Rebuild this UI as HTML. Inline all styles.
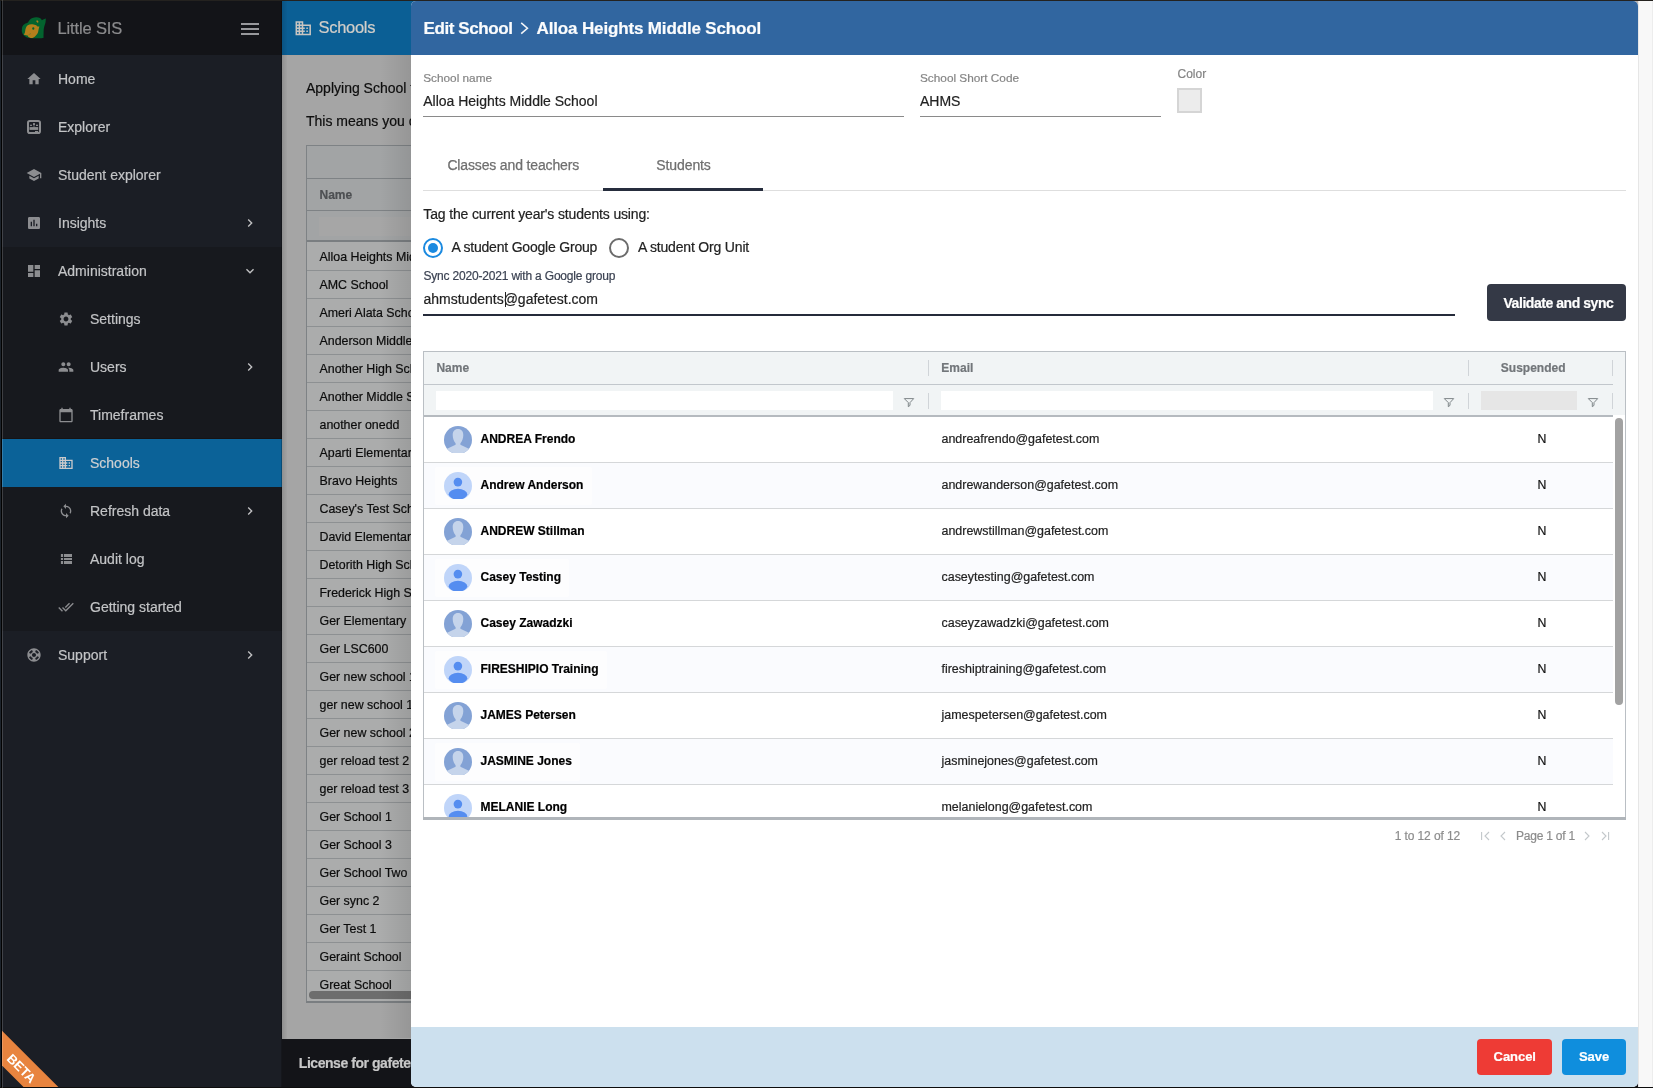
<!DOCTYPE html>
<html><head><meta charset="utf-8"><style>
*{box-sizing:border-box;margin:0;padding:0}
html,body{width:1653px;height:1088px;overflow:hidden;background:#131418;font-family:"Liberation Sans",sans-serif}
.a{position:absolute}
.t{position:absolute;white-space:nowrap;line-height:1;-webkit-text-stroke:0.2px currentColor}
#wrap{position:absolute;left:0;top:0;width:1653px;height:1088px;will-change:transform}
</style></head><body>
<div id="wrap">
<div class="a" style="left:0px;top:0px;width:282px;height:1088px;background:#1b1e25;"></div>
<div class="a" style="left:0px;top:0px;width:282px;height:55px;background:#131418;"></div>
<div class="a" style="left:0px;top:247px;width:282px;height:384px;background:#17191e;"></div>
<div class="a" style="left:0px;top:438px;width:282px;height:1px;background:#161314;"></div>
<div class="a" style="left:0px;top:439px;width:282px;height:48px;background:#0b6298;"></div>
<div class="a" style="left:0px;top:0px;width:1px;height:1088px;background:#1c232b;"></div>
<div class="a" style="left:1px;top:0px;width:1px;height:1088px;background:#020202;"></div>
<div class="a" style="left:281px;top:0px;width:1px;height:1088px;background:rgba(0,0,0,0.22);"></div>
<svg class="a" style="left:18px;top:14px" width="32" height="28" viewBox="0 0 32 28"><path fill="#03632e" d="M3.86 15.96C3.95 15.11 3.93 13.39 4.40 12.40C4.87 11.41 5.80 10.65 6.70 10.00C7.60 9.35 8.98 9.18 9.80 8.50C10.62 7.82 10.83 6.67 11.60 5.90C12.37 5.13 13.25 4.33 14.40 3.90C15.55 3.47 17.25 3.32 18.50 3.35C19.75 3.38 21.00 3.62 21.90 4.10C22.80 4.57 23.57 5.85 23.90 6.20C24.23 6.55 23.25 6.47 23.90 6.20C24.55 5.93 27.15 4.87 27.80 4.60C28.45 4.33 27.85 3.95 27.80 4.60C27.75 5.25 27.75 7.20 27.50 8.50C27.25 9.80 26.60 11.15 26.30 12.40C26.00 13.65 25.83 14.42 25.70 16.00C25.57 17.58 25.67 20.58 25.50 21.90C25.33 23.22 26.38 23.52 24.70 23.90C23.02 24.28 18.10 24.32 15.40 24.20C12.70 24.08 10.22 23.80 8.50 23.20C6.78 22.60 5.87 21.55 5.10 20.60C4.33 19.65 4.07 18.27 3.86 17.50C3.65 16.73 3.77 16.81 3.86 15.96Z"/><path fill="#b37f1c" d="M5.90 20.30C5.85 20.22 5.73 20.60 5.90 20.30C6.07 20.00 6.60 19.48 6.90 18.50C7.20 17.52 7.22 15.60 7.70 14.40C8.18 13.20 8.85 11.98 9.80 11.30C10.75 10.62 12.12 10.33 13.40 10.30C14.68 10.27 16.47 10.72 17.50 11.10C18.53 11.48 19.25 12.35 19.60 12.60C19.95 12.85 19.30 12.63 19.60 12.60C19.90 12.57 21.10 12.43 21.40 12.40C21.70 12.37 21.53 11.90 21.40 12.40C21.27 12.90 20.90 14.25 20.60 15.40C20.30 16.55 20.25 18.08 19.60 19.30C18.95 20.52 17.73 21.90 16.70 22.70C15.67 23.50 14.47 24.10 13.40 24.10C12.33 24.10 10.90 23.12 10.30 22.70C9.70 22.28 9.88 21.78 9.80 21.60C9.72 21.42 10.40 21.73 9.80 21.60C9.20 21.47 6.85 21.02 6.20 20.80C5.55 20.58 5.95 20.38 5.90 20.30Z"/><path d="M10.6 20.8 L12.9 19.5" stroke="#5e7a26" stroke-width="0.6"/><ellipse fill="#03632e" cx="15.3" cy="14.5" rx="1.05" ry="1.35"/><ellipse fill="#b37f1c" cx="19.4" cy="7.5" rx="0.85" ry="1.25" transform="rotate(-40 19.4 7.5)"/></svg>
<div class="t " style="left:57.5px;top:20.00px;font-size:16.5px;color:#8b8b8d;letter-spacing:-0.15px;">Little SIS</div>
<div class="a" style="left:241px;top:23px;width:18px;height:2px;background:#98999c;"></div>
<div class="a" style="left:241px;top:28px;width:18px;height:2px;background:#98999c;"></div>
<div class="a" style="left:241px;top:33px;width:18px;height:2px;background:#98999c;"></div>
<svg class="a" style="left:26.0px;top:71.0px" width="16" height="16" viewBox="0 0 24 24"><path fill="#8c8d90" d="M10 20v-6h4v6h5v-8h3L12 3 2 12h3v8z"/></svg>
<div class="t " style="left:58px;top:72.00px;font-size:14px;color:#c3c4c6;">Home</div>
<svg class="a" style="left:24px;top:117px" width="20" height="20" viewBox="0 0 20 20"><rect x="4" y="4" width="12" height="12" rx="1.8" fill="none" stroke="#8c8d90" stroke-width="2"/><rect x="6.1" y="7.7" width="1.8" height="1.3" fill="#8c8d90"/><rect x="9" y="6.1" width="2" height="2" rx="0.6" fill="#8c8d90"/><rect x="9.4" y="8" width="1.2" height="2.2" fill="#8c8d90" opacity="0.6"/><rect x="12" y="7.7" width="2" height="1.3" fill="#8c8d90"/><rect x="5.5" y="10.1" width="8.7" height="2.8" fill="#8c8d90"/><rect x="11" y="14" width="3" height="2" fill="#8c8d90"/></svg>
<div class="t " style="left:58px;top:120.00px;font-size:14px;color:#c3c4c6;">Explorer</div>
<svg class="a" style="left:26.0px;top:167.0px" width="16" height="16" viewBox="0 0 24 24"><path fill="#8c8d90" d="M5 13.18v4L12 21l7-3.82v-4L12 17l-7-3.82zM12 3L1 9l11 6 9-4.91V17h2V9L12 3z"/></svg>
<div class="t " style="left:58px;top:168.00px;font-size:14px;color:#c3c4c6;">Student explorer</div>
<svg class="a" style="left:26.0px;top:215.0px" width="16" height="16" viewBox="0 0 24 24"><path fill="#8c8d90" d="M19 3H5c-1.1 0-2 .9-2 2v14c0 1.1.9 2 2 2h14c1.1 0 2-.9 2-2V5c0-1.1-.9-2-2-2zM9 17H7v-7h2v7zm4 0h-2V7h2v10zm4 0h-2v-4h2v4z"/></svg>
<div class="t " style="left:58px;top:216.00px;font-size:14px;color:#c3c4c6;">Insights</div>
<svg class="a" style="left:242.0px;top:215.0px" width="16" height="16" viewBox="0 0 24 24"><path fill="#c2c2c4" d="M10 6L8.59 7.41 13.17 12l-4.58 4.59L10 18l6-6z"/></svg>
<svg class="a" style="left:26.0px;top:263.0px" width="16" height="16" viewBox="0 0 24 24"><path fill="#8c8d90" d="M3 13h8V3H3v10zm0 8h8v-6H3v6zm10 0h8V11h-8v10zm0-18v6h8V3h-8z"/></svg>
<div class="t " style="left:58px;top:264.00px;font-size:14px;color:#c3c4c6;">Administration</div>
<svg class="a" style="left:242.0px;top:263.0px" width="16" height="16" viewBox="0 0 24 24"><path fill="#c2c2c4" d="M16.59 8.59L12 13.17 7.41 8.59 6 10l6 6 6-6z"/></svg>
<svg class="a" style="left:58.0px;top:311.0px" width="16" height="16" viewBox="0 0 24 24"><path fill="#8c8d90" d="M19.14 12.94c.04-.3.06-.61.06-.94 0-.32-.02-.64-.07-.94l2.03-1.58c.18-.14.23-.41.12-.61l-1.92-3.32c-.12-.22-.37-.29-.59-.22l-2.39.96c-.5-.38-1.03-.7-1.62-.94l-.36-2.54c-.04-.24-.24-.41-.48-.41h-3.84c-.24 0-.43.17-.47.41l-.36 2.54c-.59.24-1.13.57-1.62.94l-2.39-.96c-.22-.08-.47 0-.59.22L2.74 8.87c-.12.21-.08.47.12.61l2.03 1.58c-.05.3-.09.63-.09.94s.02.64.07.94l-2.03 1.58c-.18.14-.23.41-.12.61l1.92 3.32c.12.22.37.29.59.22l2.39-.96c.5.38 1.03.7 1.62.94l.36 2.54c.05.24.24.41.48.41h3.840c.24 0 .44-.17.47-.41l.36-2.54c.59-.24 1.13-.56 1.62-.94l2.39.96c.22.08.47 0 .59-.22l1.92-3.32c.12-.22.07-.47-.12-.61l-2.01-1.58zM12 15.6c-1.98 0-3.6-1.62-3.6-3.6s1.62-3.6 3.6-3.6 3.6 1.62 3.6 3.6-1.62 3.6-3.6 3.6z"/></svg>
<div class="t " style="left:90px;top:312.00px;font-size:14px;color:#c3c4c6;">Settings</div>
<svg class="a" style="left:58.0px;top:359.0px" width="16" height="16" viewBox="0 0 24 24"><path fill="#8c8d90" d="M16 11c1.66 0 2.99-1.34 2.99-3S17.660 5 16 5c-1.66 0-3 1.34-3 3s1.34 3 3 3zm-8 0c1.66 0 2.99-1.34 2.99-3S9.66 5 8 5C6.34 5 5 6.34 5 8s1.34 3 3 3zm0 2c-2.33 0-7 1.17-7 3.5V19h14v-2.5c0-2.33-4.67-3.5-7-3.5zm8 0c-.29 0-.62.02-.97.05 1.16.84 1.97 1.97 1.97 3.45V19h6v-2.5c0-2.33-4.67-3.5-7-3.5z"/></svg>
<div class="t " style="left:90px;top:360.00px;font-size:14px;color:#c3c4c6;">Users</div>
<svg class="a" style="left:242.0px;top:359.0px" width="16" height="16" viewBox="0 0 24 24"><path fill="#c2c2c4" d="M10 6L8.59 7.41 13.17 12l-4.58 4.59L10 18l6-6z"/></svg>
<svg class="a" style="left:58.0px;top:407.0px" width="16" height="16" viewBox="0 0 24 24"><path fill="#8c8d90" d="M20 3h-1V1h-2v2H7V1H5v2H4c-1.1 0-2 .9-2 2v16c0 1.1.9 2 2 2h16c1.1 0 2-.9 2-2V5c0-1.1-.9-2-2-2zm0 18H4V8h16v13z"/></svg>
<div class="t " style="left:90px;top:408.00px;font-size:14px;color:#c3c4c6;">Timeframes</div>
<svg class="a" style="left:58.0px;top:455.0px" width="16" height="16" viewBox="0 0 24 24"><path fill="#c9c9cb" d="M12 7V3H2v18h20V7H12zM6 19H4v-2h2v2zm0-4H4v-2h2v2zm0-4H4V9h2v2zm0-4H4V5h2v2zm4 12H8v-2h2v2zm0-4H8v-2h2v2zm0-4H8V9h2v2zm0-4H8V5h2v2zm10 12h-8v-2h2v-2h-2v-2h2v-2h-2V9h8v10zm-2-8h-2v2h2v-2zm0 4h-2v2h2v-2z"/></svg>
<div class="t " style="left:90px;top:456.00px;font-size:14px;color:#cfd0d2;">Schools</div>
<svg class="a" style="left:58.0px;top:503.0px" width="16" height="16" viewBox="0 0 24 24"><path fill="#8c8d90" d="M12 4V1L8 5l4 4V6c3.31 0 6 2.69 6 6 0 1.01-.25 1.97-.7 2.8l1.46 1.46C19.54 15.03 20 13.57 20 12c0-4.42-3.58-8-8-8zm0 14c-3.31 0-6-2.69-6-6 0-1.01.25-1.97.7-2.8L5.24 7.74C4.46 8.97 4 10.43 4 12c0 4.42 3.58 8 8 8v3l4-4-4-4v3z"/></svg>
<div class="t " style="left:90px;top:504.00px;font-size:14px;color:#c3c4c6;">Refresh data</div>
<svg class="a" style="left:242.0px;top:503.0px" width="16" height="16" viewBox="0 0 24 24"><path fill="#c2c2c4" d="M10 6L8.59 7.41 13.17 12l-4.58 4.59L10 18l6-6z"/></svg>
<svg class="a" style="left:60px;top:553px" width="14" height="12" viewBox="0 0 14 12"><g fill="#8c8d90"><rect x="0.9" y="1" width="2.2" height="3"/><rect x="4" y="1" width="8" height="3"/><rect x="0.9" y="5" width="2.2" height="2"/><rect x="4" y="5" width="8" height="2"/><rect x="0.9" y="8" width="2.2" height="3"/><rect x="4" y="8" width="8" height="3"/></g></svg>
<div class="t " style="left:90px;top:552.00px;font-size:14px;color:#c3c4c6;">Audit log</div>
<svg class="a" style="left:58.0px;top:599.0px" width="16" height="16" viewBox="0 0 24 24"><path fill="#8c8d90" d="M18 7l-1.41-1.41-6.34 6.34 1.41 1.41L18 7zm4.24-1.41L11.66 16.17 7.48 12l-1.41 1.41L11.66 19l12-12-1.42-1.41zM.41 13.41L6 19l1.41-1.41L1.830 12 .41 13.41z"/></svg>
<div class="t " style="left:90px;top:600.00px;font-size:14px;color:#c3c4c6;">Getting started</div>
<svg class="a" style="left:26.0px;top:647.0px" width="16" height="16" viewBox="0 0 24 24"><path fill="#8c8d90" d="M12 2C6.48 2 2 6.48 2 12s4.48 10 10 10 10-4.48 10-10S17.52 2 12 2zm7.46 7.12l-2.78 1.15c-.51-1.36-1.58-2.44-2.95-2.94l1.15-2.78c2.1.8 3.77 2.47 4.58 4.57zM12 15c-1.66 0-3-1.34-3-3s1.34-3 3-3 3 1.34 3 3-1.34 3-3 3zM9.13 4.54l1.17 2.78c-1.38.5-2.47 1.59-2.98 2.97L4.54 9.13c.81-2.11 2.48-3.78 4.59-4.59zM4.54 14.87l2.78-1.15c.51 1.38 1.59 2.46 2.97 2.96l-1.17 2.78c-2.1-.81-3.77-2.48-4.58-4.59zm10.34 4.59l-1.15-2.78c1.37-.51 2.45-1.59 2.95-2.97l2.78 1.17c-.81 2.1-2.48 3.77-4.58 4.58z"/></svg>
<div class="t " style="left:58px;top:648.00px;font-size:14px;color:#c3c4c6;">Support</div>
<svg class="a" style="left:242.0px;top:647.0px" width="16" height="16" viewBox="0 0 24 24"><path fill="#c2c2c4" d="M10 6L8.59 7.41 13.17 12l-4.58 4.59L10 18l6-6z"/></svg>
<svg class="a" style="left:0;top:1028px" width="60" height="60" viewBox="0 0 60 60"><path fill="#e8843f" d="M2 2.7 L59.3 60 L24.5 60 L2 37.5z"/><text x="0" y="0" transform="translate(18.3 43.6) rotate(45)" font-family="Liberation Sans" font-weight="bold" font-size="13" fill="#fff" text-anchor="middle">BETA</text></svg>
<div class="a" style="left:282px;top:0px;width:1371px;height:1088px;background:#a5a5a5;"></div>
<div class="a" style="left:282px;top:0px;width:1371px;height:55px;background:#0b5f95;"></div>
<div class="a" style="left:282px;top:55px;width:1371px;height:1px;background:#a9a39f;"></div>
<svg class="a" style="left:293.75px;top:18.85px" width="18.5" height="18.5" viewBox="0 0 24 24"><path fill="#c9c5c1" d="M12 7V3H2v18h20V7H12zM6 19H4v-2h2v2zm0-4H4v-2h2v2zm0-4H4V9h2v2zm0-4H4V5h2v2zm4 12H8v-2h2v2zm0-4H8v-2h2v2zm0-4H8V9h2v2zm0-4H8V5h2v2zm10 12h-8v-2h2v-2h-2v-2h2v-2h-2V9h8v10zm-2-8h-2v2h2v-2zm0 4h-2v2h2v-2z"/></svg>
<div class="t " style="left:318.5px;top:19.00px;font-size:16.5px;color:#d2cec9;letter-spacing:-0.3px;">Schools</div>
<div class="t " style="left:306px;top:81.00px;font-size:14px;color:#0e0e0e;">Applying School tags</div>
<div class="t " style="left:306px;top:114.00px;font-size:14px;color:#0e0e0e;">This means you can</div>
<div class="a" style="left:306px;top:145px;width:110px;height:858px;background:#abacac;border:1px solid #7e8285;"></div>
<div class="a" style="left:307px;top:146px;width:110px;height:32px;background:#a2a4a5;"></div>
<div class="a" style="left:307px;top:178px;width:110px;height:1px;background:#7e8285;"></div>
<div class="a" style="left:307px;top:179px;width:110px;height:31px;background:#a2a4a5;"></div>
<div class="t " style="left:319.5px;top:189.00px;font-size:12px;color:#4d4f52;font-weight:bold;">Name</div>
<div class="a" style="left:307px;top:210px;width:110px;height:1px;background:#7e8285;"></div>
<div class="a" style="left:307px;top:211px;width:110px;height:30px;background:#a2a4a5;"></div>
<div class="a" style="left:319px;top:217px;width:100px;height:19px;background:#a6a6a6;"></div>
<div class="a" style="left:307px;top:240px;width:110px;height:2px;background:#7a7e81;"></div>
<div class="t " style="left:319.5px;top:251.00px;font-size:12.4px;color:#0c0c0c;">Alloa Heights Middle School</div>
<div class="a" style="left:307px;top:270px;width:110px;height:1px;background:#8d9092;"></div>
<div class="t " style="left:319.5px;top:279.00px;font-size:12.4px;color:#0c0c0c;">AMC School</div>
<div class="a" style="left:307px;top:298px;width:110px;height:1px;background:#8d9092;"></div>
<div class="t " style="left:319.5px;top:307.00px;font-size:12.4px;color:#0c0c0c;">Ameri Alata School</div>
<div class="a" style="left:307px;top:326px;width:110px;height:1px;background:#8d9092;"></div>
<div class="t " style="left:319.5px;top:335.00px;font-size:12.4px;color:#0c0c0c;">Anderson Middle School</div>
<div class="a" style="left:307px;top:354px;width:110px;height:1px;background:#8d9092;"></div>
<div class="t " style="left:319.5px;top:363.00px;font-size:12.4px;color:#0c0c0c;">Another High School</div>
<div class="a" style="left:307px;top:382px;width:110px;height:1px;background:#8d9092;"></div>
<div class="t " style="left:319.5px;top:391.00px;font-size:12.4px;color:#0c0c0c;">Another Middle School</div>
<div class="a" style="left:307px;top:410px;width:110px;height:1px;background:#8d9092;"></div>
<div class="t " style="left:319.5px;top:419.00px;font-size:12.4px;color:#0c0c0c;">another onedd</div>
<div class="a" style="left:307px;top:438px;width:110px;height:1px;background:#8d9092;"></div>
<div class="t " style="left:319.5px;top:447.00px;font-size:12.4px;color:#0c0c0c;">Aparti Elementary</div>
<div class="a" style="left:307px;top:466px;width:110px;height:1px;background:#8d9092;"></div>
<div class="t " style="left:319.5px;top:475.00px;font-size:12.4px;color:#0c0c0c;">Bravo Heights</div>
<div class="a" style="left:307px;top:494px;width:110px;height:1px;background:#8d9092;"></div>
<div class="t " style="left:319.5px;top:503.00px;font-size:12.4px;color:#0c0c0c;">Casey&#x27;s Test School</div>
<div class="a" style="left:307px;top:522px;width:110px;height:1px;background:#8d9092;"></div>
<div class="t " style="left:319.5px;top:531.00px;font-size:12.4px;color:#0c0c0c;">David Elementary</div>
<div class="a" style="left:307px;top:550px;width:110px;height:1px;background:#8d9092;"></div>
<div class="t " style="left:319.5px;top:559.00px;font-size:12.4px;color:#0c0c0c;">Detorith High School</div>
<div class="a" style="left:307px;top:578px;width:110px;height:1px;background:#8d9092;"></div>
<div class="t " style="left:319.5px;top:587.00px;font-size:12.4px;color:#0c0c0c;">Frederick High School</div>
<div class="a" style="left:307px;top:606px;width:110px;height:1px;background:#8d9092;"></div>
<div class="t " style="left:319.5px;top:615.00px;font-size:12.4px;color:#0c0c0c;">Ger Elementary</div>
<div class="a" style="left:307px;top:634px;width:110px;height:1px;background:#8d9092;"></div>
<div class="t " style="left:319.5px;top:643.00px;font-size:12.4px;color:#0c0c0c;">Ger LSC600</div>
<div class="a" style="left:307px;top:662px;width:110px;height:1px;background:#8d9092;"></div>
<div class="t " style="left:319.5px;top:671.00px;font-size:12.4px;color:#0c0c0c;">Ger new school 1</div>
<div class="a" style="left:307px;top:690px;width:110px;height:1px;background:#8d9092;"></div>
<div class="t " style="left:319.5px;top:699.00px;font-size:12.4px;color:#0c0c0c;">ger new school 1</div>
<div class="a" style="left:307px;top:718px;width:110px;height:1px;background:#8d9092;"></div>
<div class="t " style="left:319.5px;top:727.00px;font-size:12.4px;color:#0c0c0c;">Ger new school 2</div>
<div class="a" style="left:307px;top:746px;width:110px;height:1px;background:#8d9092;"></div>
<div class="t " style="left:319.5px;top:755.00px;font-size:12.4px;color:#0c0c0c;">ger reload test 2</div>
<div class="a" style="left:307px;top:774px;width:110px;height:1px;background:#8d9092;"></div>
<div class="t " style="left:319.5px;top:783.00px;font-size:12.4px;color:#0c0c0c;">ger reload test 3</div>
<div class="a" style="left:307px;top:802px;width:110px;height:1px;background:#8d9092;"></div>
<div class="t " style="left:319.5px;top:811.00px;font-size:12.4px;color:#0c0c0c;">Ger School 1</div>
<div class="a" style="left:307px;top:830px;width:110px;height:1px;background:#8d9092;"></div>
<div class="t " style="left:319.5px;top:839.00px;font-size:12.4px;color:#0c0c0c;">Ger School 3</div>
<div class="a" style="left:307px;top:858px;width:110px;height:1px;background:#8d9092;"></div>
<div class="t " style="left:319.5px;top:867.00px;font-size:12.4px;color:#0c0c0c;">Ger School Two</div>
<div class="a" style="left:307px;top:886px;width:110px;height:1px;background:#8d9092;"></div>
<div class="t " style="left:319.5px;top:895.00px;font-size:12.4px;color:#0c0c0c;">Ger sync 2</div>
<div class="a" style="left:307px;top:914px;width:110px;height:1px;background:#8d9092;"></div>
<div class="t " style="left:319.5px;top:923.00px;font-size:12.4px;color:#0c0c0c;">Ger Test 1</div>
<div class="a" style="left:307px;top:942px;width:110px;height:1px;background:#8d9092;"></div>
<div class="t " style="left:319.5px;top:951.00px;font-size:12.4px;color:#0c0c0c;">Geraint School</div>
<div class="a" style="left:307px;top:970px;width:110px;height:1px;background:#8d9092;"></div>
<div class="t " style="left:319.5px;top:979.00px;font-size:12.4px;color:#0c0c0c;">Great School</div>
<div class="a" style="left:309px;top:991px;width:110px;height:8px;background:#6d6d6d;border-radius:4px;"></div>
<div class="a" style="left:306px;top:1001px;width:110px;height:2px;background:#7a7e81;"></div>
<div class="a" style="left:380px;top:55px;width:31px;height:983px;background:linear-gradient(to right,rgba(0,0,0,0),rgba(0,0,0,0.09));"></div>
<div class="a" style="left:282px;top:1039px;width:1371px;height:49px;background:#131418;"></div>
<div class="t " style="left:298.8px;top:1056.00px;font-size:14px;color:#c8c8c8;font-weight:bold;letter-spacing:-0.45px;">License for gafetest.com</div>
<div class="a" style="left:0px;top:0px;width:1653px;height:1px;background:#24221f;"></div>
<div class="a" style="left:0px;top:1087px;width:1653px;height:1px;background:#0d0d0d;"></div>
<div class="a" style="left:282px;top:0px;width:5px;height:1039px;background:linear-gradient(to right,rgba(0,0,0,0.13),rgba(0,0,0,0.02));"></div>
<div class="a" style="left:2px;top:0px;width:1px;height:1088px;background:rgba(255,255,255,0.17);"></div>
<div class="a" style="left:1638px;top:1px;width:15px;height:1086px;background:#f8f8f8;border-left:1px solid #e6e6e6;border-right:1px solid #ededed;"></div>
<div class="a" style="left:1630px;top:1px;width:8px;height:8px;background:#b9b3ad;"></div>
<div class="a" style="left:411px;top:1px;width:1227px;height:1086px;background:#fff;border-radius:5px;overflow:hidden">
<div class="a" style="left:0px;top:0px;width:1227px;height:54px;background:#3166a0;"></div>
<div class="t " style="left:12.5px;top:19.00px;font-size:17px;color:#fbfcfd;font-weight:bold;letter-spacing:-0.4px;">Edit School</div>
<svg class="a" style="left:107px;top:19px" width="14" height="16" viewBox="0 0 14 16"><path d="M3.2 2.9 L9.4 8.25 L3.2 13.6" fill="none" stroke="#f2f4f7" stroke-width="1.6"/></svg>
<div class="t " style="left:125.60000000000002px;top:19.00px;font-size:17px;color:#fbfcfd;font-weight:bold;letter-spacing:-0.15px;">Alloa Heights Middle School</div>
<div class="t " style="left:12.199999999999989px;top:72.00px;font-size:11.8px;color:#858585;">School name</div>
<div class="t " style="left:12.199999999999989px;top:93.00px;font-size:14px;color:#222;">Alloa Heights Middle School</div>
<div class="a" style="left:12px;top:115px;width:481px;height:1px;background:#8a8a8a;"></div>
<div class="t " style="left:509px;top:72.00px;font-size:11.8px;color:#858585;">School Short Code</div>
<div class="t " style="left:509px;top:93.00px;font-size:14px;color:#222;">AHMS</div>
<div class="a" style="left:509px;top:115px;width:241px;height:1px;background:#8a8a8a;"></div>
<div class="t " style="left:766.5px;top:67.00px;font-size:12px;color:#858585;">Color</div>
<div class="a" style="left:766px;top:87px;width:25px;height:25px;background:#ececec;border:2px solid #d5d5d5;"></div>
<div class="t " style="left:36.39999999999998px;top:157.00px;font-size:14px;color:#6f6f6f;letter-spacing:-0.15px;-webkit-text-stroke:0.25px #6f6f6f;">Classes and teachers</div>
<div class="t " style="left:245.29999999999995px;top:157.00px;font-size:14px;color:#6f6f6f;letter-spacing:-0.1px;-webkit-text-stroke:0.25px #6f6f6f;">Students</div>
<div class="a" style="left:12px;top:189px;width:1203px;height:1px;background:#dedede;"></div>
<div class="a" style="left:192px;top:187px;width:160px;height:3px;background:#262d3d;"></div>
<div class="t " style="left:12.300000000000011px;top:206.00px;font-size:14px;color:#222;letter-spacing:-0.15px;">Tag the current year&#x27;s students using:</div>
<div class="a" style="left:12px;top:237px;width:20px;height:20px;border:2px solid #1b8ae0;border-radius:50%"></div>
<div class="a" style="left:17px;top:242px;width:10px;height:10px;background:#1b8ae0;border-radius:50%"></div>
<div class="t " style="left:40.39999999999998px;top:239.00px;font-size:14px;color:#222;letter-spacing:-0.2px;">A student Google Group</div>
<div class="a" style="left:198px;top:237px;width:20px;height:20px;border:2px solid #6c6c6c;border-radius:50%"></div>
<div class="t " style="left:226.89999999999998px;top:239.00px;font-size:14px;color:#222;letter-spacing:-0.18px;">A student Org Unit</div>
<div class="t " style="left:12.5px;top:269.00px;font-size:12px;color:#3b4252;letter-spacing:-0.19px;">Sync 2020-2021 with a Google group</div>
<div class="t " style="left:12.5px;top:291.00px;font-size:14px;color:#222;">ahmstudents@gafetest.com</div>
<div class="a" style="left:94px;top:291px;width:1px;height:15px;background:#222;"></div>
<div class="a" style="left:12px;top:313px;width:1032px;height:2px;background:#252b3a;"></div>
<div class="a" style="left:1076px;top:283px;width:139px;height:37px;background:#343946;border-radius:4px;"></div>
<div class="t " style="left:1092.5px;top:295.00px;font-size:14px;color:#fff;font-weight:bold;letter-spacing:-0.45px;">Validate and sync</div>
<div class="a" style="left:12px;top:350px;width:1203px;height:468px;background:#fff;border:1px solid #babfc4;border-bottom:0;"></div>
<div class="a" style="left:13px;top:351px;width:1201px;height:63px;background:#f1f4f5;"></div>
<div class="a" style="left:13px;top:383px;width:1189px;height:1px;background:#c2c7cc;"></div>
<div class="a" style="left:13px;top:414px;width:1189px;height:2px;background:#b5babf;"></div>
<div class="t " style="left:25.399999999999977px;top:361.00px;font-size:12px;color:#72767a;font-weight:bold;">Name</div>
<div class="t " style="left:530.3px;top:361.00px;font-size:12px;color:#72767a;font-weight:bold;">Email</div>
<div class="t " style="left:1089.8px;top:361.00px;font-size:12px;color:#72767a;font-weight:bold;">Suspended</div>
<div class="a" style="left:517px;top:359px;width:1px;height:16px;background:#d0d4d8;"></div>
<div class="a" style="left:517px;top:392px;width:1px;height:16px;background:#d0d4d8;"></div>
<div class="a" style="left:1057px;top:359px;width:1px;height:16px;background:#d0d4d8;"></div>
<div class="a" style="left:1057px;top:392px;width:1px;height:16px;background:#d0d4d8;"></div>
<div class="a" style="left:1201px;top:359px;width:1px;height:16px;background:#d0d4d8;"></div>
<div class="a" style="left:1201px;top:392px;width:1px;height:16px;background:#d0d4d8;"></div>
<div class="a" style="left:25px;top:390px;width:457px;height:19px;background:#fff;"></div>
<div class="a" style="left:530px;top:390px;width:492px;height:19px;background:#fff;"></div>
<div class="a" style="left:1070px;top:390px;width:96px;height:19px;background:#e6e6e6;"></div>
<svg class="a" style="left:492px;top:396px" width="12" height="11" viewBox="0 0 12 11"><path d="M1.3 1.6 H10.7 L7 5.6 V8.4 L5.3 9.7 V5.6 Z" fill="none" stroke="#7f8689" stroke-width="1" stroke-linejoin="round"/></svg>
<svg class="a" style="left:1032px;top:396px" width="12" height="11" viewBox="0 0 12 11"><path d="M1.3 1.6 H10.7 L7 5.6 V8.4 L5.3 9.7 V5.6 Z" fill="none" stroke="#7f8689" stroke-width="1" stroke-linejoin="round"/></svg>
<svg class="a" style="left:1176px;top:396px" width="12" height="11" viewBox="0 0 12 11"><path d="M1.3 1.6 H10.7 L7 5.6 V8.4 L5.3 9.7 V5.6 Z" fill="none" stroke="#7f8689" stroke-width="1" stroke-linejoin="round"/></svg>
<div class="a" style="left:13px;top:416px;width:1201px;height:400px;overflow:hidden">
<div class="a" style="left:0px;top:45px;width:1189px;height:1px;background:#d5d7d9;"></div>
<svg class="a" style="left:20px;top:9px" width="28" height="27" viewBox="0 0 28 27"><defs><clipPath id="c0"><circle cx="14" cy="14" r="14"/></clipPath></defs><g clip-path="url(#c0)"><rect width="28" height="28" fill="#83a2d5"/><path fill="#c5d4eb" d="M14 3.1C17.5 3.1 19.3 5.6 19.3 9C19.3 12.4 18 15.4 16.4 17.2V18.7L26.5 23.6V28H1.5V23.6L11.6 18.7V17.2C10 15.4 8.7 12.4 8.7 9C8.7 5.6 10.5 3.1 14 3.1Z"/></g></svg>
<div class="t " style="left:56.5px;top:16.00px;font-size:12px;color:#000;font-weight:bold;">ANDREA Frendo</div>
<div class="t " style="left:517.5px;top:16.00px;font-size:12.45px;color:#222;">andreafrendo@gafetest.com</div>
<div class="t " style="left:1113.4px;top:16.00px;font-size:12.3px;color:#111;">N</div>
<div class="a" style="left:0px;top:46px;width:1189px;height:46px;background:#fafbfe;"></div>
<div class="a" style="left:11px;top:50px;width:157px;height:38px;background:#fdfdfe;border-radius:2px;"></div>
<div class="a" style="left:0px;top:91px;width:1189px;height:1px;background:#d5d7d9;"></div>
<svg class="a" style="left:20px;top:55px" width="28" height="27" viewBox="0 0 28 27"><defs><clipPath id="c1"><circle cx="14" cy="14" r="14"/></clipPath></defs><g clip-path="url(#c1)"><rect width="28" height="28" fill="#c0d5f9"/><circle cx="13.9" cy="10.1" r="4.3" fill="#558df0"/><ellipse cx="14" cy="22.2" rx="9.3" ry="5.4" fill="#558df0"/></g></svg>
<div class="t " style="left:56.5px;top:62.00px;font-size:12px;color:#000;font-weight:bold;">Andrew Anderson</div>
<div class="t " style="left:517.5px;top:62.00px;font-size:12.45px;color:#222;">andrewanderson@gafetest.com</div>
<div class="t " style="left:1113.4px;top:62.00px;font-size:12.3px;color:#111;">N</div>
<div class="a" style="left:0px;top:137px;width:1189px;height:1px;background:#d5d7d9;"></div>
<svg class="a" style="left:20px;top:101px" width="28" height="27" viewBox="0 0 28 27"><defs><clipPath id="c2"><circle cx="14" cy="14" r="14"/></clipPath></defs><g clip-path="url(#c2)"><rect width="28" height="28" fill="#83a2d5"/><path fill="#c5d4eb" d="M14 3.1C17.5 3.1 19.3 5.6 19.3 9C19.3 12.4 18 15.4 16.4 17.2V18.7L26.5 23.6V28H1.5V23.6L11.6 18.7V17.2C10 15.4 8.7 12.4 8.7 9C8.7 5.6 10.5 3.1 14 3.1Z"/></g></svg>
<div class="t " style="left:56.5px;top:108.00px;font-size:12px;color:#000;font-weight:bold;">ANDREW Stillman</div>
<div class="t " style="left:517.5px;top:108.00px;font-size:12.45px;color:#222;">andrewstillman@gafetest.com</div>
<div class="t " style="left:1113.4px;top:108.00px;font-size:12.3px;color:#111;">N</div>
<div class="a" style="left:0px;top:138px;width:1189px;height:46px;background:#fafbfe;"></div>
<div class="a" style="left:11px;top:142px;width:134px;height:38px;background:#fdfdfe;border-radius:2px;"></div>
<div class="a" style="left:0px;top:183px;width:1189px;height:1px;background:#d5d7d9;"></div>
<svg class="a" style="left:20px;top:147px" width="28" height="27" viewBox="0 0 28 27"><defs><clipPath id="c3"><circle cx="14" cy="14" r="14"/></clipPath></defs><g clip-path="url(#c3)"><rect width="28" height="28" fill="#c0d5f9"/><circle cx="13.9" cy="10.1" r="4.3" fill="#558df0"/><ellipse cx="14" cy="22.2" rx="9.3" ry="5.4" fill="#558df0"/></g></svg>
<div class="t " style="left:56.5px;top:154.00px;font-size:12px;color:#000;font-weight:bold;">Casey Testing</div>
<div class="t " style="left:517.5px;top:154.00px;font-size:12.45px;color:#222;">caseytesting@gafetest.com</div>
<div class="t " style="left:1113.4px;top:154.00px;font-size:12.3px;color:#111;">N</div>
<div class="a" style="left:0px;top:229px;width:1189px;height:1px;background:#d5d7d9;"></div>
<svg class="a" style="left:20px;top:193px" width="28" height="27" viewBox="0 0 28 27"><defs><clipPath id="c4"><circle cx="14" cy="14" r="14"/></clipPath></defs><g clip-path="url(#c4)"><rect width="28" height="28" fill="#83a2d5"/><path fill="#c5d4eb" d="M14 3.1C17.5 3.1 19.3 5.6 19.3 9C19.3 12.4 18 15.4 16.4 17.2V18.7L26.5 23.6V28H1.5V23.6L11.6 18.7V17.2C10 15.4 8.7 12.4 8.7 9C8.7 5.6 10.5 3.1 14 3.1Z"/></g></svg>
<div class="t " style="left:56.5px;top:200.00px;font-size:12px;color:#000;font-weight:bold;">Casey Zawadzki</div>
<div class="t " style="left:517.5px;top:200.00px;font-size:12.45px;color:#222;">caseyzawadzki@gafetest.com</div>
<div class="t " style="left:1113.4px;top:200.00px;font-size:12.3px;color:#111;">N</div>
<div class="a" style="left:0px;top:230px;width:1189px;height:46px;background:#fafbfe;"></div>
<div class="a" style="left:11px;top:234px;width:172px;height:38px;background:#fdfdfe;border-radius:2px;"></div>
<div class="a" style="left:0px;top:275px;width:1189px;height:1px;background:#d5d7d9;"></div>
<svg class="a" style="left:20px;top:239px" width="28" height="27" viewBox="0 0 28 27"><defs><clipPath id="c5"><circle cx="14" cy="14" r="14"/></clipPath></defs><g clip-path="url(#c5)"><rect width="28" height="28" fill="#c0d5f9"/><circle cx="13.9" cy="10.1" r="4.3" fill="#558df0"/><ellipse cx="14" cy="22.2" rx="9.3" ry="5.4" fill="#558df0"/></g></svg>
<div class="t " style="left:56.5px;top:246.00px;font-size:12px;color:#000;font-weight:bold;">FIRESHIPIO Training</div>
<div class="t " style="left:517.5px;top:246.00px;font-size:12.45px;color:#222;">fireshiptraining@gafetest.com</div>
<div class="t " style="left:1113.4px;top:246.00px;font-size:12.3px;color:#111;">N</div>
<div class="a" style="left:0px;top:321px;width:1189px;height:1px;background:#d5d7d9;"></div>
<svg class="a" style="left:20px;top:285px" width="28" height="27" viewBox="0 0 28 27"><defs><clipPath id="c6"><circle cx="14" cy="14" r="14"/></clipPath></defs><g clip-path="url(#c6)"><rect width="28" height="28" fill="#83a2d5"/><path fill="#c5d4eb" d="M14 3.1C17.5 3.1 19.3 5.6 19.3 9C19.3 12.4 18 15.4 16.4 17.2V18.7L26.5 23.6V28H1.5V23.6L11.6 18.7V17.2C10 15.4 8.7 12.4 8.7 9C8.7 5.6 10.5 3.1 14 3.1Z"/></g></svg>
<div class="t " style="left:56.5px;top:292.00px;font-size:12px;color:#000;font-weight:bold;">JAMES Petersen</div>
<div class="t " style="left:517.5px;top:292.00px;font-size:12.45px;color:#222;">jamespetersen@gafetest.com</div>
<div class="t " style="left:1113.4px;top:292.00px;font-size:12.3px;color:#111;">N</div>
<div class="a" style="left:0px;top:322px;width:1189px;height:46px;background:#fafbfe;"></div>
<div class="a" style="left:11px;top:326px;width:145px;height:38px;background:#fdfdfe;border-radius:2px;"></div>
<div class="a" style="left:0px;top:367px;width:1189px;height:1px;background:#d5d7d9;"></div>
<svg class="a" style="left:20px;top:331px" width="28" height="27" viewBox="0 0 28 27"><defs><clipPath id="c7"><circle cx="14" cy="14" r="14"/></clipPath></defs><g clip-path="url(#c7)"><rect width="28" height="28" fill="#83a2d5"/><path fill="#c5d4eb" d="M14 3.1C17.5 3.1 19.3 5.6 19.3 9C19.3 12.4 18 15.4 16.4 17.2V18.7L26.5 23.6V28H1.5V23.6L11.6 18.7V17.2C10 15.4 8.7 12.4 8.7 9C8.7 5.6 10.5 3.1 14 3.1Z"/></g></svg>
<div class="t " style="left:56.5px;top:338.00px;font-size:12px;color:#000;font-weight:bold;">JASMINE Jones</div>
<div class="t " style="left:517.5px;top:338.00px;font-size:12.45px;color:#222;">jasminejones@gafetest.com</div>
<div class="t " style="left:1113.4px;top:338.00px;font-size:12.3px;color:#111;">N</div>
<svg class="a" style="left:20px;top:377px" width="28" height="27" viewBox="0 0 28 27"><defs><clipPath id="c8"><circle cx="14" cy="14" r="14"/></clipPath></defs><g clip-path="url(#c8)"><rect width="28" height="28" fill="#c0d5f9"/><circle cx="13.9" cy="10.1" r="4.3" fill="#558df0"/><ellipse cx="14" cy="22.2" rx="9.3" ry="5.4" fill="#558df0"/></g></svg>
<div class="t " style="left:56.5px;top:384.00px;font-size:12px;color:#000;font-weight:bold;">MELANIE Long</div>
<div class="t " style="left:517.5px;top:384.00px;font-size:12.45px;color:#222;">melanielong@gafetest.com</div>
<div class="t " style="left:1113.4px;top:384.00px;font-size:12.3px;color:#111;">N</div>
<div class="a" style="left:1191px;top:1px;width:8px;height:287px;background:#a2a2a2;border-radius:4px;"></div>
</div>
<div class="a" style="left:12px;top:816px;width:1203px;height:3px;background:#b0b5ba;"></div>
<div class="t " style="left:983.7px;top:829.00px;font-size:12px;color:#8c8c8c;letter-spacing:-0.1px;">1 to 12 of 12</div>
<div class="t " style="left:1104.9px;top:829.00px;font-size:12px;color:#8c8c8c;letter-spacing:-0.2px;">Page 1 of 1</div>
<svg class="a" style="left:1068px;top:829px" width="12" height="12" viewBox="0 0 12 12"><path d="M2.6 2 V10 M10 2 L6 6 L10 10" fill="none" stroke="#c3c8cb" stroke-width="1.1"/></svg>
<svg class="a" style="left:1086px;top:829px" width="12" height="12" viewBox="0 0 12 12"><path d="M8 2 L4 6 L8 10" fill="none" stroke="#c3c8cb" stroke-width="1.1"/></svg>
<svg class="a" style="left:1170px;top:829px" width="12" height="12" viewBox="0 0 12 12"><path d="M4 2 L8 6 L4 10" fill="none" stroke="#c3c8cb" stroke-width="1.1"/></svg>
<svg class="a" style="left:1188px;top:829px" width="12" height="12" viewBox="0 0 12 12"><path d="M3 2 L7 6 L3 10 M9.6 2 V10" fill="none" stroke="#c3c8cb" stroke-width="1.1"/></svg>
<div class="a" style="left:0px;top:1026px;width:1227px;height:60px;background:#cce0ee;"></div>
<div class="a" style="left:1066px;top:1038px;width:75px;height:36px;background:#ee3b35;border-radius:4px;"></div>
<div class="t " style="left:1082.6px;top:1049.00px;font-size:13px;color:#fff;font-weight:bold;letter-spacing:-0.05px;">Cancel</div>
<div class="a" style="left:1151px;top:1038px;width:64px;height:36px;background:#0f8edd;border-radius:4px;"></div>
<div class="t " style="left:1168px;top:1049.00px;font-size:13px;color:#fff;font-weight:bold;letter-spacing:-0.05px;">Save</div>
</div>
</div>
</body></html>
